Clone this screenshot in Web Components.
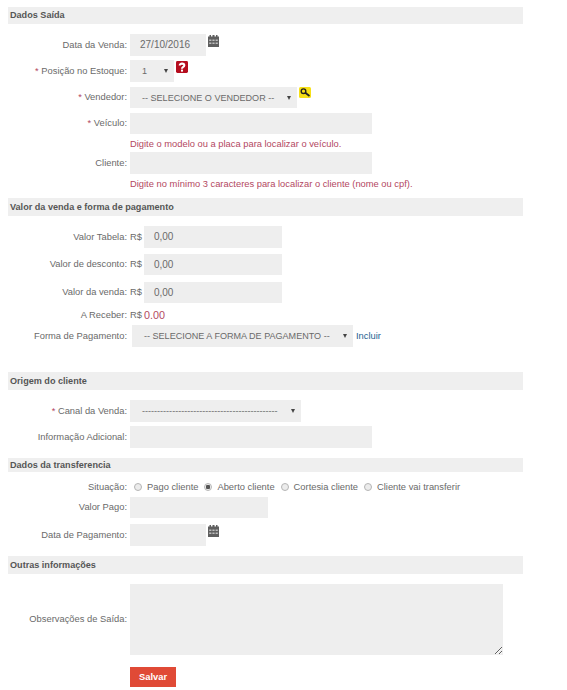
<!DOCTYPE html>
<html lang="pt-BR">
<head>
<meta charset="utf-8">
<title>Dados Saída</title>
<style>
    body { margin: 0; background: #fff; font-family: "Liberation Sans", Arial, sans-serif; font-size: 9.35px; color: #6a6a6a; }
    main { display: flex; flex-direction: column; width: 515px; padding: 7px 0 0 8px; }
    .hint { flex: 0 0 100%; height: 15px; line-height: 20px; color: #b3485f; }
    .cur { line-height: var(--h, 22px); margin-right: 2px; }
</style>
</head>
<body>
<template id="template-section">
    <style>
        :host { display: block; margin-bottom: var(--bottom, 10px); }
        h2 { margin: 0; height: var(--bar, 18px); line-height: var(--bar, 18px); padding-left: 2px; background: #efefef; color: #555; font-size: 9.1px; font-weight: bold; }
    </style>
    <h2><slot></slot></h2>
</template>
<template id="template-row">
    <style>
        :host { display: flex; align-items: flex-start; margin-bottom: var(--gap, 4px); }
        .label { flex: 0 0 119px; height: var(--h, 22px); line-height: var(--h, 22px); text-align: right; white-space: nowrap; }
        .label b { color: #b3485f; font-weight: normal; }
        .body { display: flex; flex-wrap: wrap; align-items: flex-start; margin-left: 3px; flex: 1; }
    </style>
    <div class="label"><b></b><slot name="label"></slot></div>
    <div class="body"><slot></slot></div>
</template>
<template id="template-box">
    <style>
        :host { display: block; box-sizing: border-box; height: var(--h, 22px); line-height: var(--h, 22px); background: #eee; padding-left: 10px; white-space: nowrap; color: #6a6a6a; font-size: 10px; }
    </style>
    <slot></slot>
</template>
<template id="template-select">
    <style>
        :host { display: flex; align-items: center; justify-content: space-between; box-sizing: border-box; height: var(--h, 22px); background: #eee; padding: 0 6px 0 12px; white-space: nowrap; color: #6a6a6a; font-size: 9.05px; }
        i { width: 0; height: 0; border: 2.5px solid transparent; border-top: 4px solid #444; border-bottom: 0; }
    </style>
    <span><slot></slot></span><i></i>
</template>
<template id="template-icon">
    <style>
        :host { display: block; margin: 1px 0 0 2px; line-height: 0; }
    </style>
    <span></span>
</template>
<template id="template-radio">
    <style>
        :host { display: inline-flex; align-items: center; margin-right: 6px; line-height: 15px; white-space: nowrap; }
        i { box-sizing: border-box; width: 8px; height: 8px; margin: -2px 5px 0 0; border: 1px solid #b5b5b5; border-radius: 50%; background: #ececec; }
        :host([checked]) i { background: radial-gradient(circle, #555 0 2px, #eee 2.5px); }
    </style>
    <i></i><slot></slot>
</template>
<main>
    <form-section style="--bar:17px">Dados Saída</form-section>
    <form-row label="Data da Venda:"><form-box style="width:76px">27/10/2016</form-box><form-icon name="calendar"></form-icon></form-row>
    <form-row label="Posição no Estoque:" required style="--gap:5px"><form-select style="width:44px">1</form-select><form-icon name="help"></form-icon></form-row>
    <form-row label="Vendedor:" required style="--gap:5px;--h:21px"><form-select style="width:167px">-- SELECIONE O VENDEDOR --</form-select><form-icon name="search" style="margin-top:0"></form-icon></form-row>
    <form-row label="Veículo:" required style="--gap:3px;--h:21px"><form-box style="width:242px"></form-box><div class="hint">Digite o modelo ou a placa para localizar o veículo.</div></form-row>
    <form-row label="Cliente:" style="--gap:9px"><form-box style="width:242px"></form-box><div class="hint">Digite no mínimo 3 caracteres para localizar o cliente (nome ou cpf).</div></form-row>

    <form-section>Valor da venda e forma de pagamento</form-section>
    <form-row label="Valor Tabela:" style="--gap:6px"><span class="cur">R$</span><form-box style="width:138px">0,00</form-box></form-row>
    <form-row label="Valor de desconto:" style="--gap:7px;--h:21px"><span class="cur">R$</span><form-box style="width:138px">0,00</form-box></form-row>
    <form-row label="Valor da venda:" style="--gap:4px;--h:21px"><span class="cur">R$</span><form-box style="width:138px">0,00</form-box></form-row>
    <form-row label="A Receber:" style="--h:16px;--gap:2px"><span class="cur">R$</span><span style="line-height:16px;color:#b3485f;font-size:10.8px">0.00</span></form-row>
    <form-row label="Forma de Pagamento:" style="--gap:25px"><form-select style="width:221px;margin-left:2px">-- SELECIONE A FORMA DE PAGAMENTO --</form-select><a style="line-height:22px;margin-left:3px;color:#1f6291">Incluir</a></form-row>

    <form-section>Origem do cliente</form-section>
    <form-row label="Canal da Venda:" required><form-select style="width:171px">---------------------------------------------</form-select></form-row>
    <form-row label="Informação Adicional:" style="--gap:10px"><form-box style="width:242px"></form-box></form-row>

    <form-section style="--bar:14px;--bottom:8px">Dados da transferencia</form-section>
    <form-row label="Situação:" style="--h:15px;--gap:2px"><form-radio style="margin-left:4px">Pago cliente</form-radio><form-radio checked>Aberto cliente</form-radio><form-radio>Cortesia cliente</form-radio><form-radio>Cliente vai transferir</form-radio></form-row>
    <form-row label="Valor Pago:" style="--gap:6px;--h:21px"><form-box style="width:138px"></form-box></form-row>
    <form-row label="Data de Pagamento:" style="--gap:10px"><form-box style="width:76px"></form-box><form-icon name="calendar"></form-icon></form-row>

    <form-section>Outras informações</form-section>
    <form-row label="Observações de Saída:" style="--h:71px;--gap:12px"><textarea style="box-sizing:border-box;display:block;width:373px;height:71px;background:#eee;border:0;outline:0;margin:0;padding:0"></textarea></form-row>
    <form-row><form-button>Salvar</form-button></form-row>
</main>
<script>
    const ICONS = {
        calendar: `<svg width="11" height="12" viewBox="0 0 11 12"><path fill="#5f5f5f" d="M1.500 0H3v1.500h1.500V0h2v1.500H8V0h1.500v1.500H11V12H0V1.500h1.500z"/><path fill="#bdbdbd" d="M1.200 4.500h2.200v1.500H1.200zM4.400 4.500h2.200v1.500H4.400zM7.600 4.500h2.200v1.500H7.600zM1.200 7.500h2.200v1.500H1.200zM4.400 7.500h2.200v1.500H4.400zM7.600 7.500h2.200v1.500H7.600z"/></svg>`,
        help: `<svg width="12" height="12" viewBox="0 0 13 13"><rect width="13" height="13" rx="1.500" fill="#b50d1e"/><path fill="none" stroke="#fff" stroke-width="2.200" d="M4 4.800C4 2.200 9 2.200 9 4.800 9 6.600 6.500 6.300 6.500 8.500"/><rect x="5.400" y="9.300" width="2.200" height="2.200" fill="#fff"/></svg>`,
        search: `<svg width="12" height="11" viewBox="0 0 12 11"><rect width="12" height="11" rx="1.500" fill="#f7e017"/><circle cx="4.500" cy="4.200" r="2.300" fill="none" stroke="#222" stroke-width="1.400"/><path stroke="#222" stroke-width="1.800" d="M6.300 5.800 10.500 9"/></svg>`
    };

    // Stamp a template into an open shadow root
    const attach = (el, id) => {
        el.attachShadow({ mode: 'open' }).appendChild(document.getElementById(id).content.cloneNode(true));
    };

    customElements.define('form-section', class extends HTMLElement {
        constructor() { super(); attach(this, 'template-section'); }
    });
    customElements.define('form-box', class extends HTMLElement {
        constructor() { super(); attach(this, 'template-box'); }
    });
    customElements.define('form-select', class extends HTMLElement {
        constructor() { super(); attach(this, 'template-select'); }
    });
    customElements.define('form-radio', class extends HTMLElement {
        constructor() { super(); attach(this, 'template-radio'); }
    });
    customElements.define('form-row', class extends HTMLElement {
        constructor() { super(); attach(this, 'template-row'); }
        connectedCallback() {
            this.shadowRoot.querySelector('b').textContent = this.hasAttribute('required') ? '* ' : '';
            const label = document.createElement('span');
            label.slot = 'label';
            label.textContent = this.getAttribute('label') || '';
            this.appendChild(label);
        }
    });
    customElements.define('form-icon', class extends HTMLElement {
        constructor() { super(); attach(this, 'template-icon'); }
        connectedCallback() {
            this.shadowRoot.querySelector('span').innerHTML = ICONS[this.getAttribute('name')];
        }
    });
    customElements.define('form-button', class extends HTMLElement {
        constructor() {
            super();
            this.attachShadow({ mode: 'open' }).innerHTML = `
                <style>
                    :host { display: block; }
                    button { display: block; width: 46px; height: 20px; padding: 0; border: 0; background: #e04a36; color: #fff; font: bold 9.35px "Liberation Sans", Arial, sans-serif; }
                </style>
                <button><slot></slot></button>`;
        }
    });
</script>
</body>
</html>
